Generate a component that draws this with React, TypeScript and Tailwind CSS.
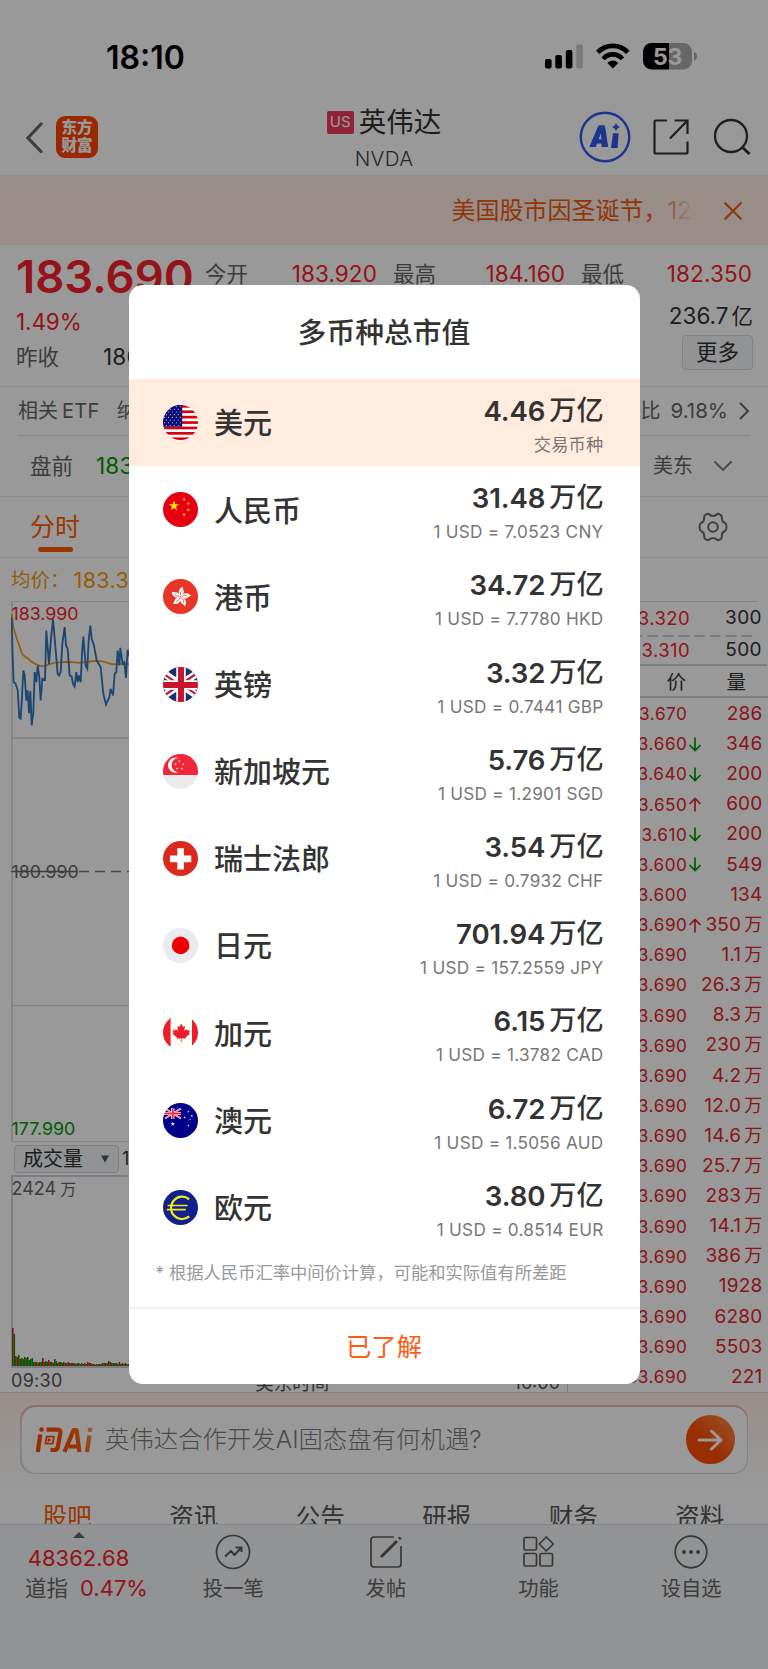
import type { ReactNode } from "react"

interface Currency {
  name: string
  flag: ReactNode
  value: string
  note: string
}

const STAR = "M0 -1L.23 -.31L.95 -.31L.37 .12L.59 .81L0 .38L-.59 .81L-.37 .12L-.95 -.31L-.23 -.31Z"

function UnionJack() {
  return (
    <>
      <rect width="35" height="35" fill="#1b2f6e" />
      <path d="M-1 5L36 30M36 5L-1 30" stroke="#fff" strokeWidth="7" />
      <path d="M-1 5.8L17.5 18.3M36 5L17.5 17.5M36 29.2L17.5 16.7M-1 30L17.5 17.5" stroke="#c8152d" strokeWidth="2.2" />
      <path d="M18 0V35M0 18H35" stroke="#fff" strokeWidth="9.5" />
      <path d="M18 0V35M0 18H35" stroke="#c8152d" strokeWidth="6" />
    </>
  )
}

function UsFlag() {
  const stripes = [0, 2, 4, 6, 8, 10, 12]
  const stars: number[][] = []
  for (let r = 0; r < 8; r++) {
    for (let c = 0; c < 5; c++) stars.push([1.6 + c * 3.9 + (r % 2) * 1.9, 1.6 + r * 2.7])
  }
  return (
    <>
      <rect width="35" height="35" fill="#fff" />
      {stripes.map((s) => (
        <rect key={s} y={s * 2.7} width="35" height="2.7" fill="#d8020d" />
      ))}
      <rect width="19.2" height="21.7" fill="#0c0c78" />
      {stars.filter(([x]) => x < 18.6).map(([x, y]) => (
        <circle key={`${x}-${y}`} cx={x} cy={y} r="0.6" fill="#c9c9e6" />
      ))}
    </>
  )
}

function CnFlag() {
  const small = [[21, 7.3], [25.3, 11.6], [25.3, 18], [21, 22.6]]
  return (
    <>
      <rect width="35" height="35" fill="#e60012" />
      <path d={STAR} transform="translate(11 14) scale(5.4)" fill="#ffe600" />
      {small.map(([x, y]) => (
        <path key={y} d={STAR} transform={`translate(${x} ${y}) rotate(20) scale(1.8)`} fill="#ffe600" />
      ))}
    </>
  )
}

function HkFlag() {
  return (
    <>
      <rect width="35" height="35" fill="#e73528" />
      {[10, 82, 154, 226, 298].map((a) => (
        <g key={a} transform={`translate(17.7 17.9) rotate(${a})`}>
          <path d="M0 -.4C-3.6 -2.6 -4 -8 .6 -10.4C.2 -8.6 1.4 -7.6 2 -6.2C2.8 -4 1.8 -1.6 0 -.4Z" fill="#fff" />
          <path d="M0 -1.5C-1.6 -3.4 -1 -5 .2 -6.6" stroke="#e73528" strokeWidth=".7" fill="none" />
        </g>
      ))}
    </>
  )
}

function SgFlag() {
  return (
    <>
      <rect width="35" height="35" fill="#ebebed" />
      <rect width="35" height="21" fill="#f0263a" />
      <circle cx="12.6" cy="11.2" r="7.6" fill="#fff" />
      <circle cx="15.8" cy="11.2" r="7.2" fill="#f0263a" />
      {[[16.4, 7.2], [12.6, 10.2], [20.4, 10.2], [14, 14.6], [18.8, 14.6]].map(([x, y]) => (
        <path key={`${x}-${y}`} d={STAR} transform={`translate(${x} ${y}) scale(1.3)`} fill="#fff" />
      ))}
    </>
  )
}

function ChFlag() {
  return (
    <>
      <rect width="35" height="35" fill="#dc281e" />
      <path d="M17.6 7.2V28.6M6.9 17.9H28.3" stroke="#fff" strokeWidth="6.6" />
    </>
  )
}

function JpFlag() {
  return (
    <>
      <rect width="35" height="35" fill="#ebebee" />
      <circle cx="17.6" cy="17.4" r="8.8" fill="#ee0000" />
    </>
  )
}

function CaFlag() {
  return (
    <>
      <rect width="35" height="35" fill="#fffefa" />
      <path d="M0 0H7.6V35H0ZM29 0H35V35H29Z" fill="#ec1f27" />
      <path
        d="M18.2 8.6L20 12L22 11L21.3 16L23.6 14L24.3 15.5L26.8 15.1L26 18L27 18.8L22.4 22.6L22.8 23.8L18.6 23.3V27H17.8V23.3L13.6 23.8L14 22.6L9.4 18.8L10.4 18L9.6 15.1L12.1 15.5L12.8 14L15.1 16L14.4 11L16.4 12Z"
        fill="#ec1f27"
      />
    </>
  )
}

function AuFlag() {
  return (
    <>
      <rect width="35" height="35" fill="#000089" />
      <g>
        <path d="M2 5.5L18 15.5M18 5.5L2 15.5" stroke="#fff" strokeWidth="2" />
        <path d="M2 5.5L18 15.5M18 5.5L2 15.5" stroke="#f0263a" strokeWidth=".8" />
        <path d="M9.8 5V16M0 10.5H18" stroke="#fff" strokeWidth="3.2" />
        <path d="M9.8 5V16M0 10.5H18" stroke="#f0263a" strokeWidth="1.8" />
      </g>
      <path d={STAR} transform="translate(9.8 21) scale(2.3)" fill="#fff" />
      {[[25.4, 8.6], [21.6, 14.4], [28.8, 13], [25.4, 22.6]].map(([x, y]) => (
        <path key={y} d={STAR} transform={`translate(${x} ${y}) scale(1.3)`} fill="#fff" />
      ))}
      <circle cx="27" cy="16.6" r=".6" fill="#fff" />
    </>
  )
}

function EuFlag() {
  return (
    <>
      <rect width="35" height="35" fill="#10208c" />
      <path d="M26.2 9.4A11 11.2 0 1 0 26.2 26.4" stroke="#f2ea14" strokeWidth="2.2" fill="none" />
      <path d="M4.6 15.5H24.6M3.8 19.7H22.8" stroke="#f2ea14" strokeWidth="1.7" />
    </>
  )
}

const currencies: Currency[] = [
  { name: "美元", flag: <UsFlag />, value: "4.46", note: "交易币种" },
  { name: "人民币", flag: <CnFlag />, value: "31.48", note: "1 USD = 7.0523 CNY" },
  { name: "港币", flag: <HkFlag />, value: "34.72", note: "1 USD = 7.7780 HKD" },
  { name: "英镑", flag: <UnionJack />, value: "3.32", note: "1 USD = 0.7441 GBP" },
  { name: "新加坡元", flag: <SgFlag />, value: "5.76", note: "1 USD = 1.2901 SGD" },
  { name: "瑞士法郎", flag: <ChFlag />, value: "3.54", note: "1 USD = 0.7932 CHF" },
  { name: "日元", flag: <JpFlag />, value: "701.94", note: "1 USD = 157.2559 JPY" },
  { name: "加元", flag: <CaFlag />, value: "6.15", note: "1 USD = 1.3782 CAD" },
  { name: "澳元", flag: <AuFlag />, value: "6.72", note: "1 USD = 1.5056 AUD" },
  { name: "欧元", flag: <EuFlag />, value: "3.80", note: "1 USD = 0.8514 EUR" },
]

const trades: { price: string; dir?: "up" | "down"; qty: string; unit?: string }[] = [
  { price: "183.670", qty: "286" },
  { price: "183.660", dir: "down", qty: "346" },
  { price: "183.640", dir: "down", qty: "200" },
  { price: "183.650", dir: "up", qty: "600" },
  { price: "183.610", dir: "down", qty: "200" },
  { price: "183.600", dir: "down", qty: "549" },
  { price: "183.600", qty: "134" },
  { price: "183.690", dir: "up", qty: "350", unit: "万" },
  { price: "183.690", qty: "1.1", unit: "万" },
  { price: "183.690", qty: "26.3", unit: "万" },
  { price: "183.690", qty: "8.3", unit: "万" },
  { price: "183.690", qty: "230", unit: "万" },
  { price: "183.690", qty: "4.2", unit: "万" },
  { price: "183.690", qty: "12.0", unit: "万" },
  { price: "183.690", qty: "14.6", unit: "万" },
  { price: "183.690", qty: "25.7", unit: "万" },
  { price: "183.690", qty: "283", unit: "万" },
  { price: "183.690", qty: "14.1", unit: "万" },
  { price: "183.690", qty: "386", unit: "万" },
  { price: "183.690", qty: "1928" },
  { price: "183.690", qty: "6280" },
  { price: "183.690", qty: "5503" },
  { price: "183.690", qty: "221" },
]

const tabs = ["股吧", "资讯", "公告", "研报", "财务", "资料"]

const volumes = [38, 32, 10, 9, 11, 7, 8, 7, 9, 8, 9, 6, 7, 8, 4, 4, 4, 3, 4, 4, 8, 4, 5, 4, 6, 4, 4, 3, 7, 5, 3, 4, 4, 3, 4, 3, 3, 4, 3, 3, 3, 3, 2, 3, 3, 2, 3, 2, 3, 2, 4, 3, 3, 2, 2, 1.5, 2, 2, 2, 2, 3, 3, 3, 3, 5, 4, 3, 3, 3, 3, 2, 4, 2, 3, 2, 3, 2, 2, 3, 3]

function StatusBar() {
  return (
    <div className="flex h-[102px] items-start justify-between pl-[106px] pr-[71px] pt-[38px]">
      <span className="h-[39px] text-[32px] leading-[39px] font-semibold text-black">18:10</span>
      <svg className="mt-[3px]" width="154" height="32" viewBox="543 41 154 32">
        <rect x="545" y="59" width="6.6" height="9.6" rx="2" />
        <rect x="555.3" y="55" width="6.6" height="13.6" rx="2" />
        <rect x="565.8" y="50" width="6.6" height="18.6" rx="2" />
        <rect x="576.3" y="44.3" width="6.6" height="24.3" rx="2" fill="#cbcbcb" />
        <path d="M597.8 52.4A20.5 20.5 0 0 1 627.8 52.4" stroke="#000" strokeWidth="4.8" fill="none" />
        <path d="M603.2 58.9A12.5 12.5 0 0 1 622.4 58.9" stroke="#000" strokeWidth="4.6" fill="none" />
        <path d="M612.8 68.4L607.4 63Q612.8 58.2 618.2 63Z" />
        <path d="M651.5 43H669V69.5H651.5A8.5 8.5 0 0 1 643 61V51.5A8.5 8.5 0 0 1 651.5 43Z" />
        <path d="M669 43H683.5A8.5 8.5 0 0 1 692 51.5V61A8.5 8.5 0 0 1 683.5 69.5H669ZM694 52Q697 53 697 56.3T694 60.6Z" fill="#acacac" />
        <text x="667.7" y="64.5" textAnchor="middle" fontSize="23" fontWeight="700" fill="#fff">53</text>
      </svg>
    </div>
  )
}

function Header() {
  return (
    <header className="flex h-[75px] border-b-2 border-[#eeeff1]">
      <div className="flex w-[300px] items-center pb-0.5 pl-[25px]">
        <svg width="19" height="32" viewBox="0 0 19 32">
          <path d="M16 2L3 16L16 29.5" stroke="#666" strokeWidth="3.2" fill="none" strokeLinecap="round" />
        </svg>
        <div className="mb-0.5 ml-3 flex h-[42px] w-[42px] flex-col items-center justify-center rounded-[9px] bg-[#ff4400] text-[15.5px] leading-[17.5px] font-black text-white">
          <span>东方</span>
          <span>财富</span>
        </div>
      </div>
      <div className="flex w-[168px] flex-col items-center">
        <div className="mt-[2px] flex h-9 items-center gap-[5px]">
          <span className="flex h-[23px] w-[27px] items-center justify-center rounded-[2px] bg-[#f03a5f] text-[15px] text-white">US</span>
          <span className="text-[27.5px] leading-9 whitespace-nowrap text-[#333]">英伟达</span>
        </div>
        <span className="mt-[5px] text-[20.5px] leading-7 font-light tracking-[0.3px] text-[#444]">NVDA</span>
      </div>
      <div className="flex flex-1 items-center justify-end pr-[17px] pb-[3px]">
        <svg width="52" height="52" viewBox="0 0 52 52">
          <circle cx="26" cy="26" r="24.2" stroke="#3359f0" strokeWidth="2.4" fill="none" />
          <path d="M10.5 35.5L19 15.5Q19.6 14.2 21 14.2H24.6Q26 14.2 26.1 15.6L29.2 36H22.8L22.5 32.6H18L16.7 36H11Q10 36 10.5 35.5ZM19.5 28.2H22.3L22 22.5Z" fill="#3359f0" />
          <path d="M34 22.2H39.6L38.6 37H32Z" fill="#3359f0" />
          <path d="M37 12L38.4 14.6L41 16L38.4 17.4L37 20L35.6 17.4L33 16L35.6 14.6Z" fill="#3359f0" />
        </svg>
        <svg className="ml-[21px]" width="38" height="38" viewBox="0 0 38 38" stroke="#333" strokeWidth="2.2" fill="none">
          <path d="M15 2.5H4Q2.5 2.5 2.5 4V34Q2.5 35.5 4 35.5H34Q35.5 35.5 35.5 34V23.5M22.5 2.5H35.5V16M35 3L18 20.5" />
        </svg>
        <svg className="ml-[23px]" width="38" height="38" viewBox="0 0 38 38" stroke="#333" strokeWidth="2.3" fill="none">
          <circle cx="18" cy="18" r="16" />
          <path d="M29 29L36.5 36" strokeWidth="3" />
        </svg>
      </div>
    </header>
  )
}

function Quote() {
  return (
    <section className="h-[142px] border-b border-[#e9eaec] pr-[15px] pl-4 text-[#666]">
      <div className="flex h-[53px] items-start">
        <span className="mt-[5px] w-[189px] text-[45.5px] leading-[54px] font-semibold text-[#f8222a]">183.690</span>
        <div className="mt-[13px] flex h-8 flex-1 items-center text-[21.5px]">
          <span className="w-[84px]">今开</span>
          <span className="w-[88px] text-right text-[22.5px] tracking-[0.1px] text-[#f8222a]">183.920</span>
          <span className="ml-4 w-[84px]">最高</span>
          <span className="w-[88px] text-right text-[22.5px] tracking-[0.1px] text-[#f8222a]">184.160</span>
          <span className="ml-4 w-[83px]">最低</span>
          <span className="w-[88px] text-right text-[22.5px] tracking-[0.1px] text-[#f8222a]">182.350</span>
        </div>
      </div>
      <div className="flex h-9 items-center justify-between text-[22.5px]">
        <span className="pt-3 tracking-[-0.1px] text-[#f8222a]">1.49%</span>
        <span className="text-[#333]">236.7<span className="ml-[3px] text-[21.5px]">亿</span></span>
      </div>
      <div className="flex h-[39px] items-end justify-between text-[21.5px]">
        <div className="flex h-8 items-center">
          <span className="w-[87px]">昨收</span>
          <span className="text-[22.5px] tracking-[0.2px] text-[#333]">180.990</span>
        </div>
        <span className="mb-[3px] flex h-[35px] w-[71px] items-center justify-center rounded border border-[#d5dae0] bg-[#f3f5f7] text-[21.5px] text-[#333]">更多</span>
      </div>
    </section>
  )
}

function InfoRows() {
  return (
    <>
      <div className="mx-[18px] flex h-[49px] items-center border-b border-[#e4e5e8] text-[20px] text-[#666]">
        <span>相关</span>
        <span className="ml-1 tracking-[0.3px]">ETF</span>
        <span className="ml-[17px]">纳指</span>
        <span className="flex-1 pr-2.5 text-right">占比</span>
        <span className="text-[20.5px]">9.18%</span>
        <svg className="ml-2.5" width="12" height="18" viewBox="0 0 12 18">
          <path d="M2 1L10 9L2 17" stroke="#666" strokeWidth="2" fill="none" />
        </svg>
      </div>
      <div className="flex h-[61px] items-center border-b border-[#e4e5e8] pr-[35px] pl-[30px] text-[21.5px] text-[#666]">
        <span>盘前</span>
        <span className="ml-[23px] flex-1 text-[22.5px] tracking-[0.2px] text-[#009a00]">183.400</span>
        <span className="text-[20px]">美东</span>
        <svg className="ml-5" width="20" height="12" viewBox="0 0 20 12">
          <path d="M1.5 1.5L10 10L18.5 1.5" stroke="#777" strokeWidth="1.8" fill="none" />
        </svg>
      </div>
      <div className="flex h-[61px] items-center justify-between border-b border-[#e9eaec] pr-10 pl-[30px]">
        <div className="flex flex-col items-center pt-2 text-[#ff5c00]">
          <span className="text-[25px] leading-[34px]">分时</span>
          <span className="mt-[3px] h-[5px] w-[35px] rounded-full bg-[#ff5c00]" />
        </div>
        <svg width="30" height="30" viewBox="0 0 30 30" stroke="#6a6a6a" strokeWidth="2" fill="none" strokeLinejoin="round">
          <path d="M8 2.5Q10 1.2 11.5 2.6Q15 5.2 18.5 2.6Q20 1.2 22 2.5Q24 3.5 23.8 5.5Q23.6 9.5 27 11Q28.5 12 28.5 15Q28.5 18 27 19Q23.6 20.5 23.8 24.5Q24 26.5 22 27.5Q20 28.8 18.5 27.4Q15 24.8 11.5 27.4Q10 28.8 8 27.5Q6 26.5 6.2 24.5Q6.4 20.5 3 19Q1.5 18 1.5 15Q1.5 12 3 11Q6.4 9.5 6.2 5.5Q6 3.5 8 2.5Z" />
          <circle cx="15" cy="15" r="4.8" />
        </svg>
      </div>
    </>
  )
}

function Chart() {
  return (
    <div className="w-[600px] shrink-0 pl-[11px]">
      <div className="flex h-[43px] items-center pt-0.5 text-[19.5px] text-[#f79a0e]">
        <span>均价：</span>
        <span className="ml-1 text-[21.5px] tracking-[0.4px]">183.386</span>
      </div>
      <div className="relative flex h-[541px] flex-col justify-between border-y border-l-2 border-[#dcdde4]">
        <svg className="absolute top-0 -left-[2px]" width="580" height="541" viewBox="0 0 580 541" fill="none">
          <path d="M0 136H580M0 403.5H580" stroke="#d4d6e4" strokeWidth="1.5" />
          <path d="M0 269.5H66" stroke="#666" strokeWidth="1.3" />
          <path d="M68 269.5H580" stroke="#777" strokeWidth="1.3" strokeDasharray="10 6" />
          <g transform="translate(-11 -41.5) scale(.3333)">
            <path
              d="M35 160L40 200L50 235L58 255L66 280Q75 290 85 295Q95 305 105 310Q118 317 130 318L148 312Q160 306 175 306Q190 304 205 304L240 307L285 301L310 303L335 311H384L420 308"
              stroke="#f79a0e"
              strokeWidth="5"
            />
            <path
              d="M35 170L38 290L41 365L46 368L53 388L58 472L62 475L66 410L70 330L74 345L79 420L83 390L87 458L91 392L95 495L100 455L104 335L109 365L113 315L118 350L122 420L127 355L135 358L139 210L147 310L153 235L159 175L165 245L173 340L177 345L182 335L187 250L194 200L198 255L203 265L209 345L215 348L219 370L224 378L229 335L233 365L237 345L242 365L246 280L250 228L257 315L262 325L266 240L271 195L275 235L282 255L290 300L302 320L310 400L318 432L328 410L332 385L339 405L344 340L349 335L353 270L358 315L361 262L368 310L373 305L378 352L383 268L392 300"
              stroke="#2f77c4"
              strokeWidth="5.5"
            />
          </g>
        </svg>
        <span className="relative -ml-[1.5px] text-[17.8px] leading-6 text-[#f8222a]">183.990</span>
        <span className="relative -ml-[1.5px] text-[17.8px] leading-6 text-[#666]">180.990</span>
        <span className="relative -ml-[1.5px] text-[17.8px] leading-6 text-[#009a00]">177.990</span>
      </div>
      <div className="flex h-[35px] items-center border-b-2 border-[#cfd1da] pl-[3px] text-[#333]">
        <span className="flex h-7 w-[105px] items-center justify-between rounded border border-[#d0d3da] bg-[#f4f5f7] pr-[9px] pl-2 text-[20px]">
          成交量
          <svg width="8" height="8" viewBox="0 0 8 8">
            <path d="M0 .5H8L4 7.5Z" fill="#555" />
          </svg>
        </span>
        <span className="ml-[3px] text-[18px]">1274万</span>
      </div>
      <div className="flex h-[191px] flex-col justify-between border-b-2 border-l-2 border-[#cfd1da]">
        <span className="-ml-[1.5px] h-6 text-[18px] leading-6 text-[#666]">2424<span className="ml-1 text-[16px]">万</span></span>
        <svg className="-ml-[1.5px]" width="130" height="40" viewBox="0 0 130 40">
          {volumes.map((v, i) => (
            <rect
              key={i}
              x={i * 1.5}
              y={40 - v}
              width="1.6"
              height={v}
              fill={i % 5 === 0 || i % 7 === 3 || (i > 13 && i % 3 === 0) ? "#d2232a" : "#009a00"}
            />
          ))}
        </svg>
      </div>
      <div className="flex h-[24px] w-[557px] items-center justify-between border-r border-[#cfd1da] pt-px pr-[7px] text-[18px] text-[#555]">
        <span className="tracking-[0.3px]">09:30</span>
        <span className="pt-1.5 pl-2 text-[18.5px]">美东时间</span>
        <span className="pt-1">16:00</span>
      </div>
    </div>
  )
}

function OrderBook() {
  return (
    <div className="flex-1 pt-[43px]">
      <div className="mr-[11px] flex h-[34px] items-center border-t border-[#d8dae2] text-[19px] tracking-[0.4px]">
        <span className="w-[90px] text-right text-[18.5px] text-[#f8222a]">183.320</span>
        <span className="-mr-[5px] flex-1 text-right text-[#333]">300</span>
      </div>
      <svg width="157" height="2" viewBox="0 0 157 2" className="block">
        <path d="M0 1H157" stroke="#c9cbd6" strokeWidth="2" strokeDasharray="11 4.7" />
      </svg>
      <div className="mr-px flex h-[29px] items-center border-b-2 border-[#cfd1da] text-[19px] tracking-[0.4px]">
        <span className="w-[90px] text-right text-[18.5px] text-[#f8222a]">183.310</span>
        <span className="flex-1 pr-[5px] text-right text-[#333]">500</span>
      </div>
      <div className="flex h-8 items-center border-b-2 border-[#cfd1da] pt-[3px] text-[19.5px] text-[#333]">
        <span className="w-[86px] text-right">价</span>
        <span className="flex-1 pr-[22px] text-right">量</span>
      </div>
      <div className="pt-px">
        {trades.map((t, i) => (
          <div key={i} className="flex h-[30.15px] items-center text-[#e5262c]">
            <span className="w-[87.5px] text-right text-[17.2px] tracking-[0.55px]">{t.price}</span>
            <span className="w-[13px]">
              {t.dir && (
                <svg width="13" height="15" viewBox="0 0 13 15" fill="none" stroke={t.dir === "up" ? "#e5262c" : "#009a00"} strokeWidth="1.7">
                  <path d={t.dir === "up" ? "M7 14.5V1.5M1.5 7L7 1.5L12.5 7" : "M7 .5V13.5M1.5 8L7 13.5L12.5 8"} />
                </svg>
              )}
            </span>
            <span className="flex-1 pr-[5.5px] text-right text-[19px] tracking-[0.2px] whitespace-nowrap">
              {t.qty}
              {t.unit && <span className="ml-[3px] text-[18px]">{t.unit}</span>}
            </span>
          </div>
        ))}
      </div>
    </div>
  )
}

function AskAi() {
  return (
    <section className="h-[132px] border-t border-[#dcdce0] bg-gradient-to-b from-[#fdeee6] to-white to-75% px-5 pt-3">
      <div className="rounded-[15px] bg-gradient-to-b from-[#f4b3ad] via-[#e2d8e4] to-[#cbd9ea] p-[1.5px]">
        <div className="flex h-[66px] items-center rounded-[14px] bg-white pr-3 pl-[13px]">
          <svg width="58" height="28" viewBox="0 0 58 28">
            <defs>
              <linearGradient id="ask" gradientUnits="userSpaceOnUse" x1="0" x2="58" y1="28" y2="0">
                <stop offset="0" stopColor="#ff4a00" />
                <stop offset=".65" stopColor="#ff5200" />
                <stop offset="1" stopColor="#ff9a60" />
              </linearGradient>
            </defs>
            <g fill="none" stroke="url(#ask)" strokeWidth="4.2" strokeLinejoin="round">
              <path d="M5.3 8.5L2.8 26M11.5 3.6H22.5Q26 3.6 25.3 7.5L22.8 21Q22.2 24 19 24H15.5" />
              <path d="M11.6 10.6H19L17.7 17.6H10.4Z" strokeWidth="1.8" />
              <path d="M29.5 26L38.6 4H41.6L44.4 26M34 20.5H43.5" />
              <path d="M54.4 9.5L52 26" />
            </g>
            <path d="M13 12L16.6 14.1L12.5 16.4Z" fill="#ff4a00" />
            <circle cx="6.6" cy="3.6" r="2.3" fill="#ff4c00" />
            <circle cx="55" cy="3.8" r="2.4" fill="#ff8a4c" />
          </svg>
          <span className="ml-[12.5px] flex-1 text-[24.4px] font-light whitespace-nowrap text-[#7c7c7c]">英伟达合作开发AI固态盘有何机遇?</span>
          <span className="flex h-[49px] w-[49px] items-center justify-center rounded-full bg-gradient-to-tr from-[#ff4d00] from-45% to-[#ff9040]">
            <svg width="26" height="22" viewBox="0 0 26 22" fill="none" stroke="#fff" strokeWidth="3" strokeLinecap="round" strokeLinejoin="round">
              <path d="M2 11H24M14.5 2L24 11L14.5 20" />
            </svg>
          </span>
        </div>
      </div>
      <div className="-mr-[15px] -ml-[16px] mt-[28px] grid h-[22px] grid-cols-6 overflow-hidden text-center text-[24.5px] leading-[30px] text-[#555]">
        {tabs.map((tab, i) => (
          <span key={tab} className={i === 0 ? "text-[#ff5c00]" : ""}>{tab}</span>
        ))}
      </div>
    </section>
  )
}

function BottomItem({ label, children }: { label: string; children: ReactNode }) {
  return (
    <div className="flex w-[152.6px] flex-col items-center pt-[8px] text-[#666]">
      <svg width="38" height="38" viewBox="0 0 38 38" fill="none" stroke="#5c5c5c" strokeWidth="1.7" strokeLinejoin="round">
        {children}
      </svg>
      <span className="mt-[3px] text-[20.3px] leading-[30px]">{label}</span>
    </div>
  )
}

function BottomBar() {
  return (
    <nav className="flex h-[145px] border-t border-[#d9dce2] bg-[#f4f6f9]">
      <div className="flex w-[157px] flex-col items-center pt-[7px] text-[#f8222a]">
        <svg width="12" height="6" viewBox="0 0 12 6">
          <path d="M6 0L12 6H0Z" fill="#666" />
        </svg>
        <span className="mt-[5px] text-[22px] leading-[30px]">48362.68</span>
        <span className="ml-[16px] flex text-[22px] leading-[30px]">
          <span className="mr-3 text-[21.5px] text-[#666]">道指</span>0.47%
        </span>
      </div>
      <BottomItem label="投一笔">
        <circle cx="19" cy="19" r="16.5" />
        <path d="M11 23.5L17 18L20.5 22L27 15M21.5 14.5H27.5V19" strokeWidth="2" />
      </BottomItem>
      <BottomItem label="发帖">
        <path d="M27 4H7Q4 4 4 7V31Q4 34 7 34H31Q34 34 34 31V13" />
        <path d="M14 24L30 8M32 6L33.5 4.5" strokeWidth="3" />
      </BottomItem>
      <BottomItem label="功能">
        <rect x="5" y="4.5" width="12.5" height="12.5" rx="1.5" />
        <rect x="5" y="20.5" width="12.5" height="12.5" rx="1.5" />
        <rect x="21" y="20.5" width="12.5" height="12.5" rx="1.5" />
        <path d="M27.3 4L34.3 11L27.3 18L20.3 11Z" />
      </BottomItem>
      <BottomItem label="设自选">
        <circle cx="19" cy="19" r="15.8" />
        <g fill="#5c5c5c" stroke="none">
          <circle cx="12" cy="19" r="1.9" />
          <circle cx="19" cy="19" r="1.9" />
          <circle cx="26" cy="19" r="1.9" />
        </g>
      </BottomItem>
    </nav>
  )
}

function MarketValueDialog() {
  return (
    <div className="absolute inset-0 flex items-start justify-center bg-black/40 pt-[285px]">
      <div className="h-[1099px] w-[511px] overflow-hidden rounded-[14px] bg-white text-[#333]">
        <h2 className="h-[94px] text-center text-[28.8px] leading-[96px] font-medium">多币种总市值</h2>
        {currencies.map((c, i) => (
          <div key={c.name} className={`flex h-[87.2px] items-center pr-[36px] pl-[34.5px] ${i === 0 ? "bg-[#ffecdf]" : ""}`}>
            <svg className="rounded-full" width="35" height="35" viewBox="0 0 35 35">
              {c.flag}
            </svg>
            <span className="ml-4 flex-1 pt-[3px] text-[29px] font-medium">{c.name}</span>
            <div className="flex flex-col items-end pt-[6px]">
              <span className="flex text-[27.6px] leading-[34px] font-semibold tracking-[-0.1px]">
                {c.value}
                <span className="ml-1 text-[27.2px] font-medium">万亿</span>
              </span>
              <span className="mt-[5px] text-[17.2px] leading-6 tracking-[0.25px] text-[#777]">{c.note}</span>
            </div>
          </div>
        ))}
        <p className="h-[58px] border-b-2 border-[#f1f1f3] pl-[27px] text-[17.3px] leading-[43px] whitespace-nowrap text-[#999]">
          * 根据人民币汇率中间价计算，可能和实际值有所差距
        </p>
        <button className="block w-full text-center text-[25.3px] leading-[76px] text-[#ff5c14]">已了解</button>
      </div>
    </div>
  )
}

export default function App() {
  return (
    <div className="relative h-[1669px] w-[768px] overflow-hidden bg-white font-['Inter','Noto_Sans_CJK_SC',sans-serif]">
      <StatusBar />
      <Header />
      <div className="flex h-[68px] items-center justify-end bg-[#feece4] pr-[25px] text-[24px] text-[#f25a0c]">
        <span>美国股市因圣诞节，</span>
        <span className="bg-gradient-to-r from-[#f25a0c]/60 to-[#f25a0c]/10 bg-clip-text text-transparent">12</span>
        <svg className="ml-[31px]" width="20" height="20" viewBox="0 0 20 20">
          <path d="M1.5 1.5L18.5 18.5M18.5 1.5L1.5 18.5" stroke="#f25a0c" strokeWidth="2" />
        </svg>
      </div>
      <Quote />
      <InfoRows />
      <div className="flex h-[834px]">
        <Chart />
        <OrderBook />
      </div>
      <AskAi />
      <BottomBar />
      <MarketValueDialog />
    </div>
  )
}
